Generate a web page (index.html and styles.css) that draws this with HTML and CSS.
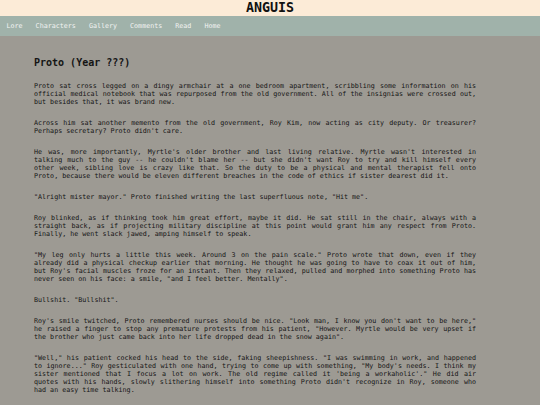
FILE: index.html
```html
<!DOCTYPE html>
<html>

<head>
  <title>Anguis</title>
  <link rel="stylesheet" href="styles.css">
</head>

<body>
  <div class="site-header">
    <h1>ANGUIS</h1>
  </div>
  <nav class="nav-bar">
    <a href="#">Lore</a>
    <a href="#">Characters</a>
    <a href="#">Gallery</a>
    <a href="#">Comments</a>
    <a href="#">Read</a>
    <a href="#">Home</a>
  </nav>
  <div class="content">
    <h2>Proto (Year ???)</h2>
    <p>Proto sat cross legged on a dingy armchair at a one bedroom apartment, scribbling some information on his official medical notebook that was repurposed from the old government. All of the insignias were crossed out, but besides that, it was brand new.</p>
    <p>Across him sat another memento from the old government, Roy Kim, now acting as city deputy. Or treasurer? Perhaps secretary? Proto didn't care.</p>
    <p>He was, more importantly, Myrtle's older brother and last living relative. Myrtle wasn't interested in talking much to the guy -- he couldn't blame her -- but she didn't want Roy to try and kill himself every other week, sibling love is crazy like that. So the duty to be a physical and mental therapist fell onto Proto, because there would be eleven different breaches in the code of ethics if sister dearest did it.</p>
    <p>"Alright mister mayor." Proto finished writing the last superfluous note, "Hit me".</p>
    <p>Roy blinked, as if thinking took him great effort, maybe it did. He sat still in the chair, always with a straight back, as if projecting military discipline at this point would grant him any respect from Proto. Finally, he went slack jawed, amping himself to speak.</p>
    <p>"My leg only hurts a little this week. Around 3 on the pain scale." Proto wrote that down, even if they already did a physical checkup earlier that morning. He thought he was going to have to coax it out of him, but Roy's facial muscles froze for an instant. Then they relaxed, pulled and morphed into something Proto has never seen on his face: a smile, "and I feel better. Mentally".</p>
    <p>Bullshit. "Bullshit".</p>
    <p>Roy's smile twitched, Proto remembered nurses should be nice. "Look man, I know you don't want to be here," he raised a finger to stop any premature protests from his patient, "However. Myrtle would be very upset if the brother who just came back into her life dropped dead in the snow again".</p>
    <p>"Well," his patient cocked his head to the side, faking sheepishness. "I was swimming in work, and happened to ignore..." Roy gesticulated with one hand, trying to come up with something, "My body's needs. I think my sister mentioned that I focus a lot on work. The old regime called it 'being a workaholic'." He did air quotes with his hands, slowly slithering himself into something Proto didn't recognize in Roy, someone who had an easy time talking.</p>
  </div>
</body>

</html>
```

FILE: styles.css
```css
* {
  box-sizing: border-box;
  margin: 0;
  padding: 0;
}

body {
  font-family: 'DejaVu Sans Mono', monospace;
  background-color: #9d9a93;
  color: #151515;
  min-height: 100vh;
}

.site-header {
  background-color: #fcebd7;
  height: 16px;
  text-align: center;
}

.site-header h1 {
  font-size: 13.3px;
  line-height: 16px;
  font-weight: 700;
  color: #111111;
}

.nav-bar {
  display: flex;
  background-color: #a0b2aa;
  height: 20px;
  align-items: center;
}

.nav-bar a {
  color: #f2f2f2;
  text-decoration: none;
  font-size: 6.7px;
  padding: 0 6.5px;
}

.content {
  width: 442px;
  margin-left: 34px;
  padding-top: 21px;
}

.content h2 {
  font-size: 10px;
  line-height: 12px;
  font-weight: 700;
  margin-bottom: 13px;
}

.content p {
  font-size: 6.7px;
  line-height: 8px;
  text-align: justify;
  margin-bottom: 13px;
}
```
